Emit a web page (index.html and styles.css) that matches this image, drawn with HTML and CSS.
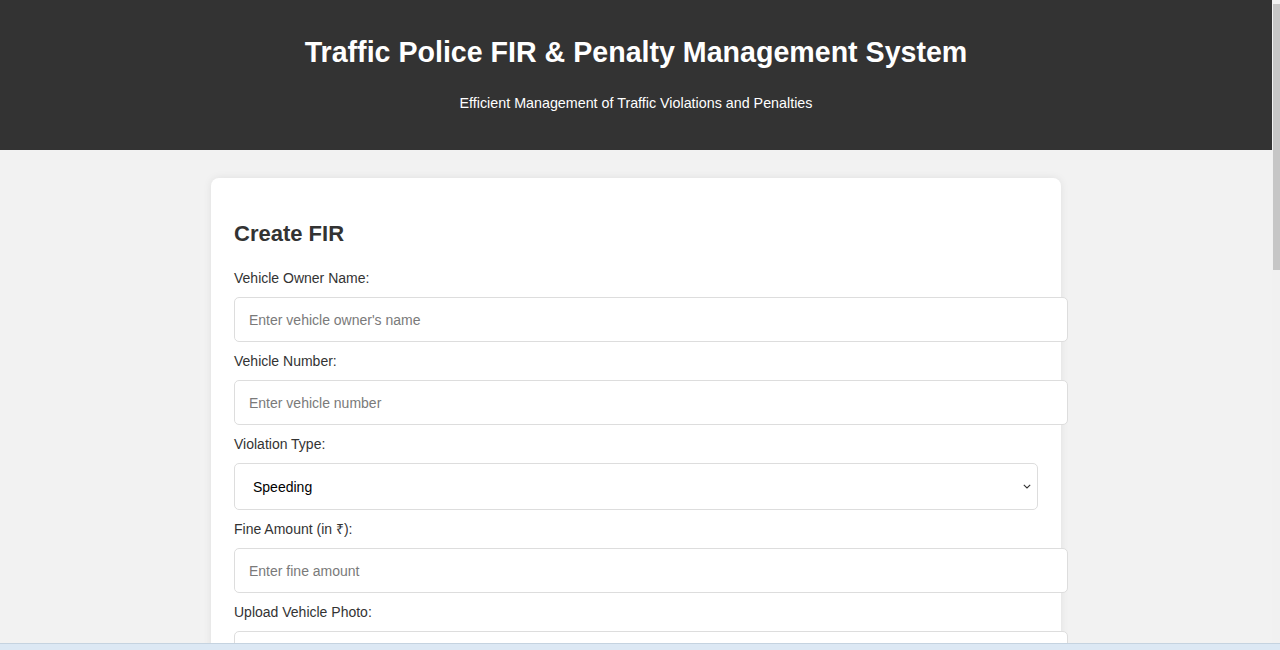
FILE: index.html
```html
<!DOCTYPE html>
<html lang="en">
<head>
<meta charset="UTF-8">
<title>Traffic Police FIR &amp; Penalty Management System</title>
<link rel="stylesheet" href="styles.css">
</head>
<body>
<div class="page">
  <header class="site-header">
    <h1 class="site-title">Traffic Police FIR &amp; Penalty Management System</h1>
    <p class="site-subtitle">Efficient Management of Traffic Violations and Penalties</p>
  </header>
  <main class="content">
    <section class="card">
      <h2 class="card-title">Create FIR</h2>
      <form class="fir-form">
        <label class="field-label" for="owner">Vehicle Owner Name:</label>
        <input class="field-input" id="owner" type="text" placeholder="Enter vehicle owner's name">
        <label class="field-label" for="number">Vehicle Number:</label>
        <input class="field-input" id="number" type="text" placeholder="Enter vehicle number">
        <label class="field-label" for="violation">Violation Type:</label>
        <select class="field-select" id="violation">
          <option>Speeding</option>
          <option>Signal Jumping</option>
          <option>No Helmet</option>
          <option>No Seatbelt</option>
          <option>Drunk Driving</option>
        </select>
        <label class="field-label" for="fine">Fine Amount (in ₹):</label>
        <input class="field-input" id="fine" type="number" placeholder="Enter fine amount">
        <label class="field-label" for="photo">Upload Vehicle Photo:</label>
        <input class="field-input field-file" id="photo" type="file">
        <button class="submit-btn" type="button">Create FIR</button>
      </form>
    </section>
  </main>
</div>
<div class="scrollbar"><div class="scrollbar-thumb"></div></div>
<div class="taskbar"></div>
</body>
</html>
```

FILE: styles.css
```css
html, body {
  margin: 0;
  padding: 0;
}
body {
  background: #f2f2f2;
  font-family: "Liberation Sans", Arial, sans-serif;
  color: #333;
}
.page {
  margin-right: 8px;
}
.site-header {
  background: #333;
  color: #fff;
  text-align: center;
  height: 150px;
  box-sizing: border-box;
  padding-top: 36px;
}
.site-title {
  margin: 0;
  font-size: 28.6px;
  line-height: 32px;
  font-weight: bold;
}
.site-subtitle {
  margin: 27px 0 0;
  font-size: 14.3px;
  line-height: 16px;
}
.content {
  padding: 28px 0 60px;
}
.card {
  width: 804px;
  margin: 0 auto;
  background: #fff;
  border-radius: 8px;
  padding: 20px 23px 30px 23px;
  box-shadow: 0 0 8px rgba(0, 0, 0, 0.08);
}
.card-title {
  margin: 23px 0 23px;
  font-size: 22px;
  line-height: 26px;
  font-weight: bold;
  color: #333;
}
.fir-form {
  display: block;
}
.field-label {
  display: block;
  font-size: 14px;
  line-height: 16px;
  margin-bottom: 11px;
  color: #333;
}
.field-input {
  display: block;
  width: 100%;
  height: 43px;
  padding: 0 14px;
  margin: 0 0 11px;
  border: 1px solid #ddd;
  border-radius: 5px;
  font-family: "Liberation Sans", Arial, sans-serif;
  font-size: 14px;
  color: #333;
  background: #fff;
}
.field-input::placeholder {
  color: #7a7a7a;
}
.field-file {
  height: auto;
  padding: 16px 14px;
}
.field-select {
  display: block;
  width: 100%;
  height: 47px;
  padding: 0 30px 0 18px;
  margin: 0 0 11px;
  border: 1px solid #ddd;
  border-radius: 5px;
  font-family: "Liberation Sans", Arial, sans-serif;
  font-size: 14px;
  color: #000;
  background-color: #fff;
  appearance: none;
  -webkit-appearance: none;
  background-image: url("data:image/svg+xml;utf8,<svg xmlns='http://www.w3.org/2000/svg' width='8' height='5' viewBox='0 0 8 5'><path d='M0.8 0.8 L4 4 L7.2 0.8' fill='none' stroke='%23333' stroke-width='1.1'/></svg>");
  background-repeat: no-repeat;
  background-position: right 6px center;
}
.submit-btn {
  margin-top: 10px;
  padding: 12px 20px;
  border: none;
  border-radius: 5px;
  background: #333;
  color: #fff;
  font-family: "Liberation Sans", Arial, sans-serif;
  font-size: 14px;
}
.scrollbar {
  position: fixed;
  top: 0;
  right: 0;
  bottom: 0;
  width: 8px;
  background: #f1f1f1;
}
.scrollbar-thumb {
  margin: 4px 0 0 1px;
  height: 266px;
  background: #c6c6c6;
}
.taskbar {
  position: fixed;
  left: 0;
  right: 0;
  bottom: 0;
  height: 6px;
  background: #dce8f4;
  border-top: 1px solid #c5d3e0;
}
```
